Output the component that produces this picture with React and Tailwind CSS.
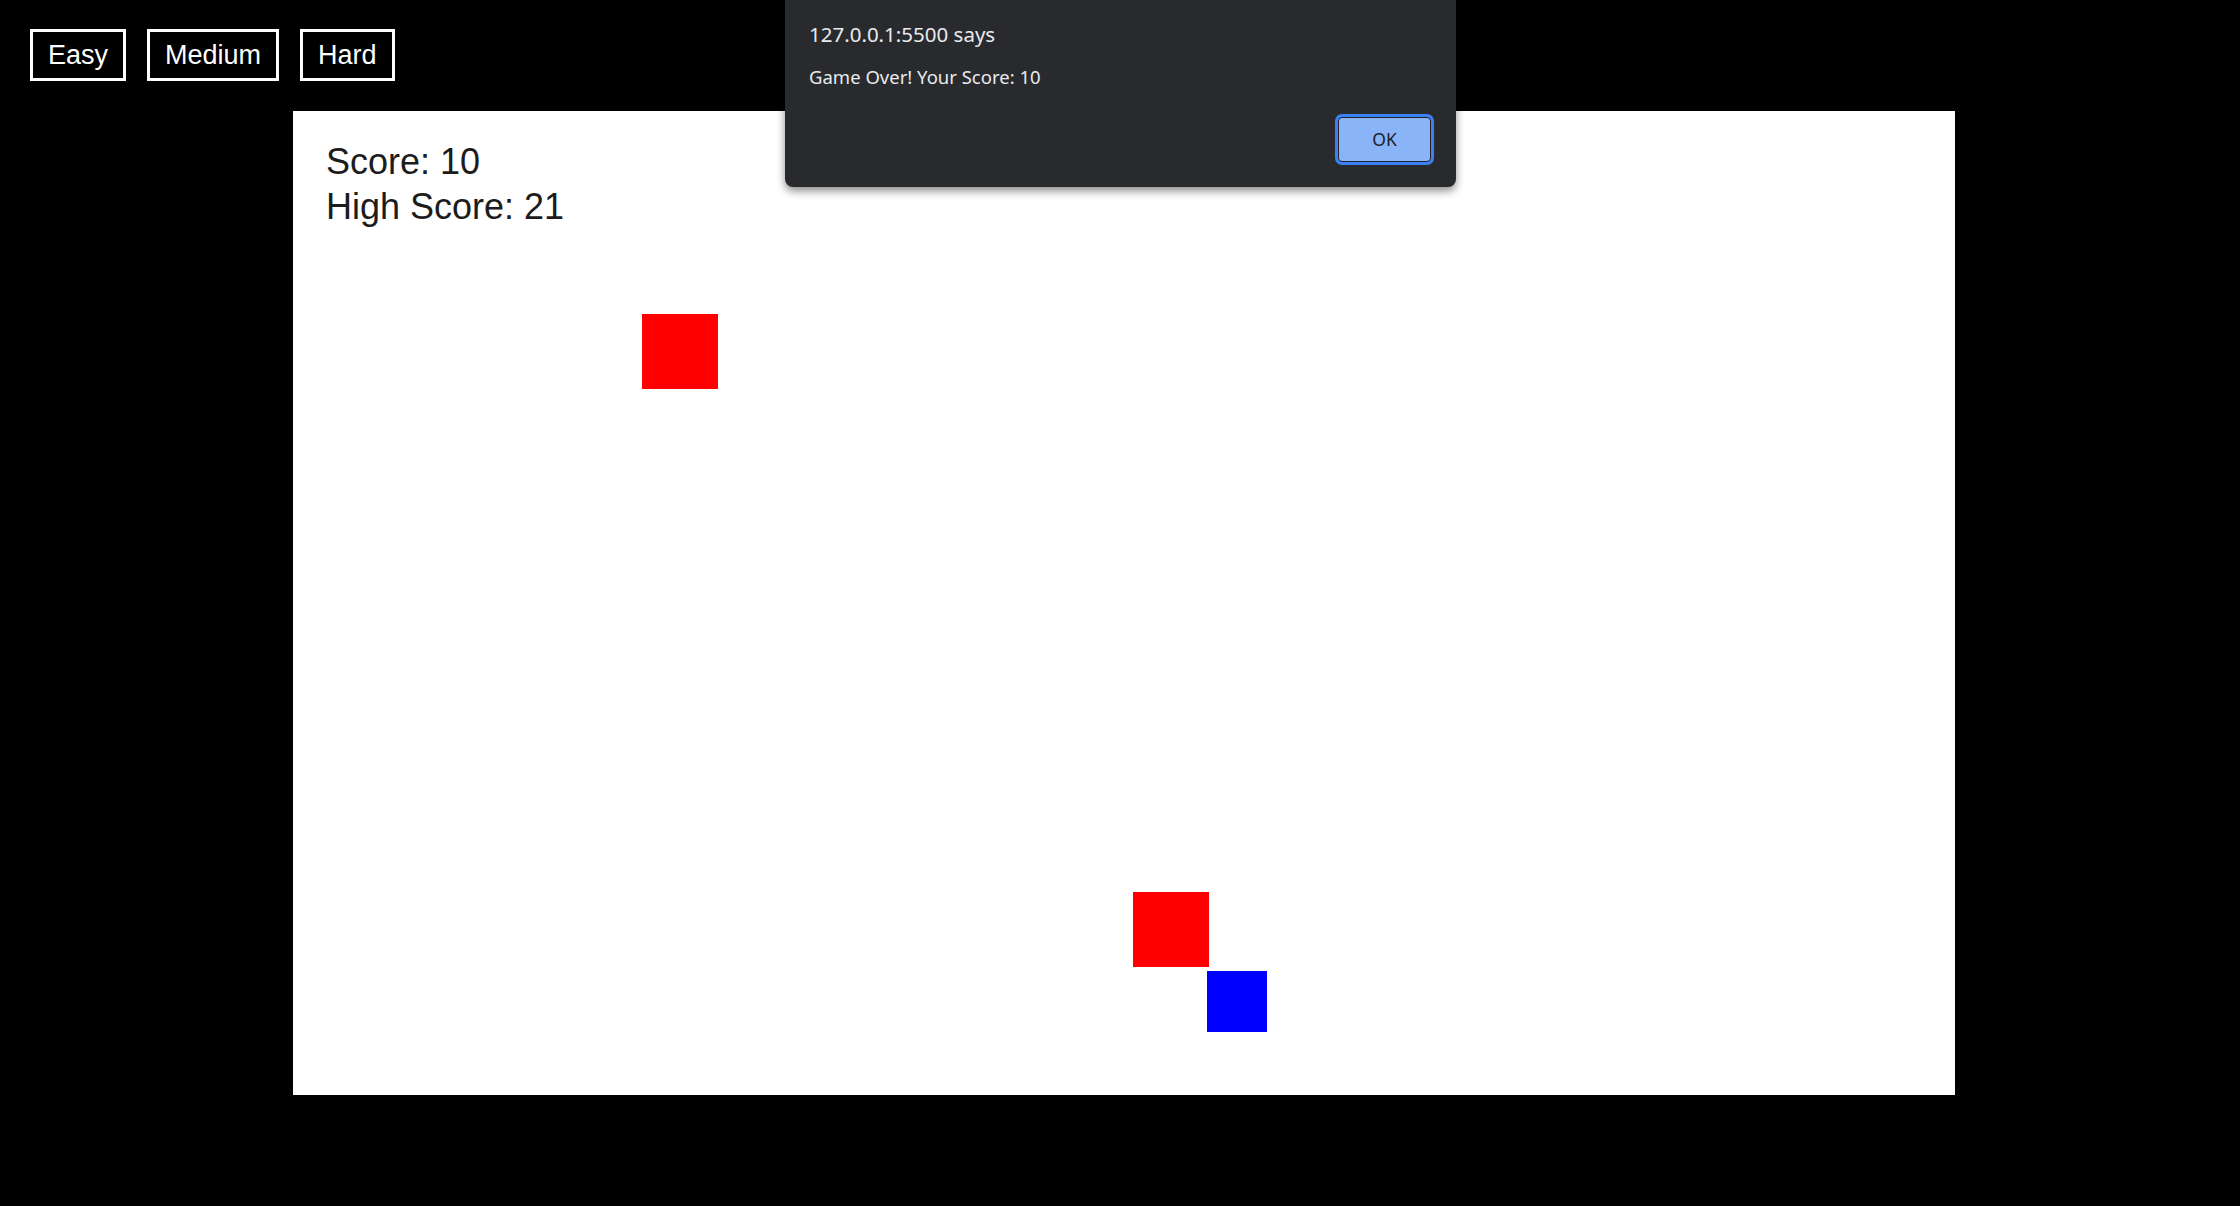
export default function App() {
  const levels = ["Easy", "Medium", "Hard"];

  return (
    <div className="relative min-h-screen w-full bg-black font-['Liberation_Sans',Arial,sans-serif]">
      {/* DIFFICULTY BUTTONS */}
      <div className="flex gap-[21px] pl-[30px] pt-[29px]">
        {levels.map((level) => (
          <button
            key={level}
            className="border-[3px] border-white bg-black px-[15px] py-[7.5px] text-[27px] leading-[31px] text-white"
          >
            {level}
          </button>
        ))}
      </div>

      {/* GAME BOARD */}
      <div className="relative mt-[30px] ml-[293px] h-[984px] w-[1662px] bg-white pl-[33px] pt-[28px] text-[36px] leading-[45px] text-[#1c1c1c]">
        <p>Score: 10</p>
        <p>High Score: 21</p>

        {/* food + snake */}
        <div className="absolute left-[349px] top-[203px] h-[75px] w-[76px] bg-[#ff0000]"></div>
        <div className="absolute left-[840px] top-[781px] h-[75px] w-[76px] bg-[#ff0000]"></div>
        <div className="absolute left-[914px] top-[860px] h-[61px] w-[60px] bg-[#0000ff]"></div>
      </div>

      {/* ALERT DIALOG */}
      <div className="absolute left-[785px] top-0 w-[671px] rounded-b-[8px] bg-[#292a2d] pl-[24px] pr-[22px] pt-[20px] pb-[22px] font-['Noto_Sans',sans-serif] text-[#e8eaed] shadow-[0_4px_8px_rgba(0,0,0,0.45)]">
        <p className="text-[20.5px] leading-[28px]">127.0.0.1:5500 says</p>
        <p className="mt-[16px] text-[18.5px] leading-[26px]">Game Over! Your Score: 10</p>
        <div className="mt-[24px] flex justify-end">
          <button className="m-[3px] h-[45px] w-[93px] rounded-[4px] border border-[#202124] bg-[#8ab4f8] text-[17.5px] text-[#202124] ring-3 ring-[#3b80f5]">
            OK
          </button>
        </div>
      </div>
    </div>
  );
}
